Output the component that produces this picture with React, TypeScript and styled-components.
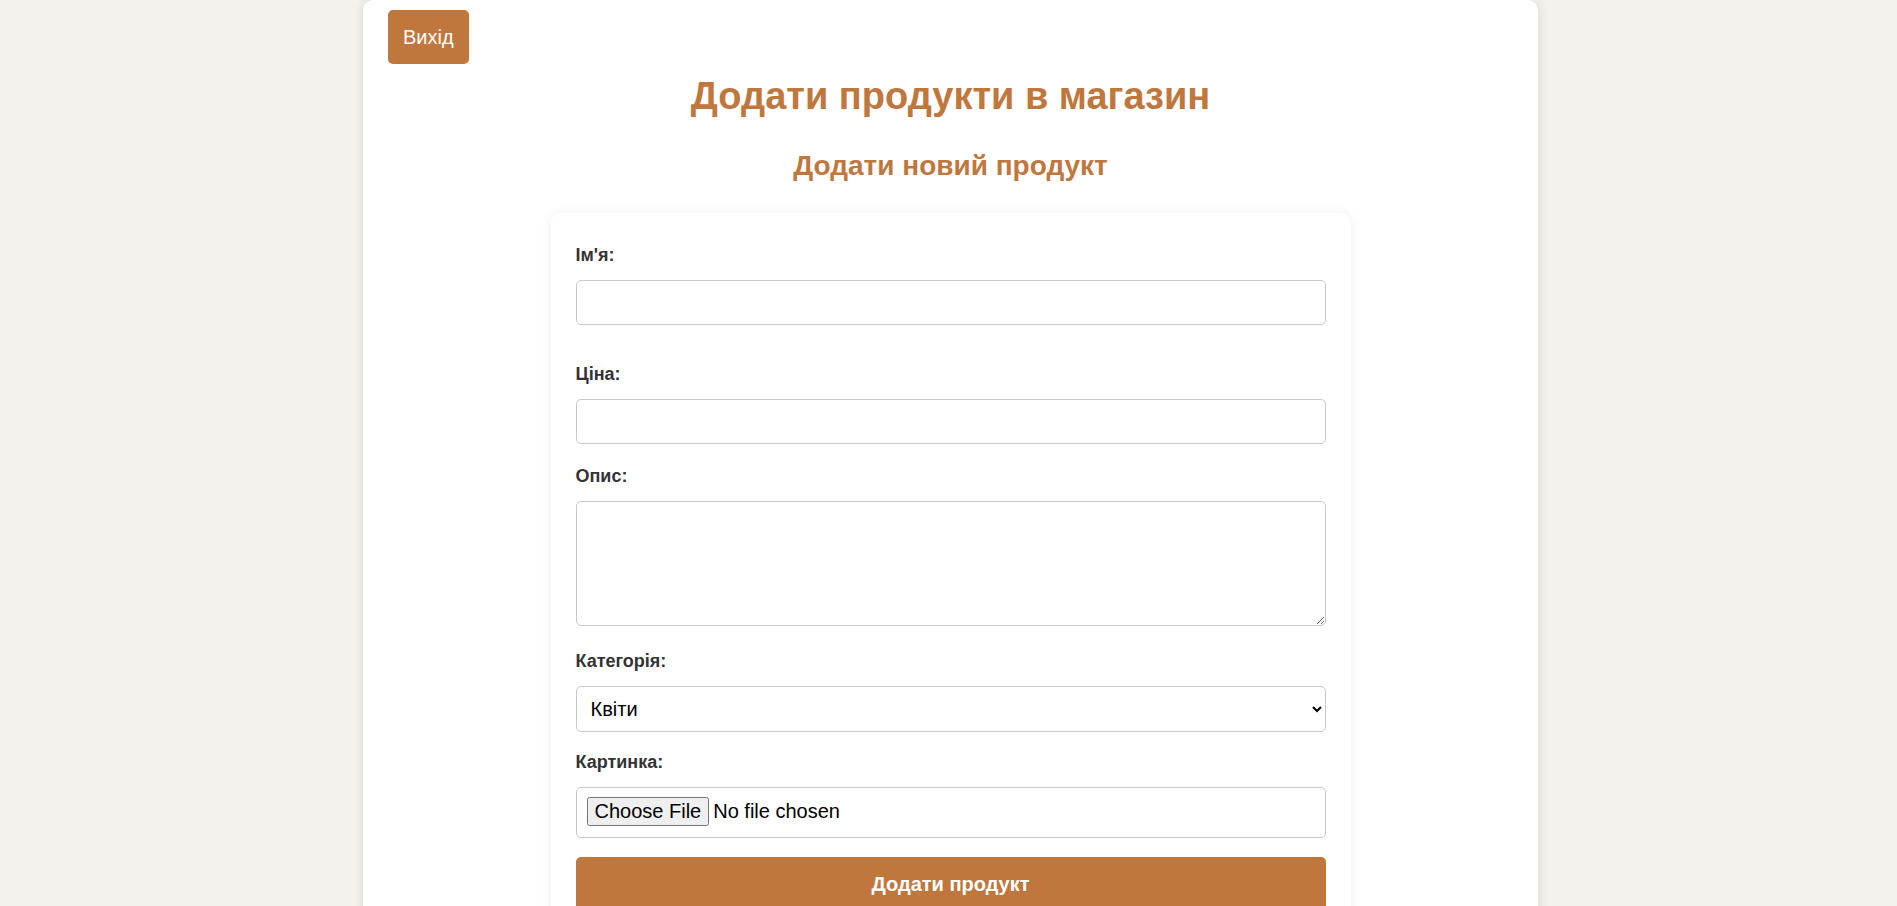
import React from "react";
import styled, { createGlobalStyle } from "styled-components";

const brown = "#bf773d";

const GlobalStyle = createGlobalStyle`
  html, body {
    margin: 0;
    padding: 0;
    background: #f5f2ed;
    font-family: "Liberation Sans", Arial, sans-serif;
  }
  * { box-sizing: border-box; }
`;

const Shell = styled.div`
  padding-left: 4px;
`;

const Page = styled.div`
  width: 1175px;
  margin: 0 auto;
  padding: 10px 25px 40px;
  background: #ffffff;
  border-radius: 10px;
  box-shadow: 0 0 12px rgba(0, 0, 0, 0.12);
  min-height: 1000px;
`;

const TopBar = styled.div`
  display: flex;
  justify-content: flex-start;
`;

const LogoutButton = styled.button`
  background: ${brown};
  color: #ffffff;
  border: none;
  border-radius: 5px;
  padding: 15px 15px;
  font-family: "Liberation Sans", Arial, sans-serif;
  font-size: 20px;
  line-height: 24px;
  cursor: pointer;
`;

const Title = styled.h1`
  margin: 8px 0 0;
  text-align: center;
  color: ${brown};
  font-family: "Liberation Sans", Arial, sans-serif;
  font-weight: 700;
  font-size: 38px;
  line-height: 48px;
`;

const Subtitle = styled.h2`
  margin: 29px 0 0;
  text-align: center;
  color: ${brown};
  font-family: "Liberation Sans", Arial, sans-serif;
  font-weight: 700;
  font-size: 28px;
  line-height: 34px;
`;

const Card = styled.form`
  width: 800px;
  margin: 30px auto 0;
  padding: 31px 25px 30px;
  background: #ffffff;
  border-radius: 10px;
  box-shadow: 0 0 12px rgba(0, 0, 0, 0.07);
`;

const Group = styled.div<{ $gap: number }>`
  display: flex;
  flex-direction: column;
  margin-bottom: ${(p) => p.$gap}px;
`;

const Label = styled.label`
  display: block;
  font-family: "Liberation Sans", Arial, sans-serif;
  font-weight: 700;
  font-size: 18px;
  line-height: 22px;
  color: #333333;
  margin-bottom: 14px;
`;

const fieldBase = `
  width: 100%;
  border: 1px solid #c8c8c8;
  border-radius: 5px;
  font-family: "Liberation Sans", Arial, sans-serif;
  font-size: 20px;
  color: #000;
  background: #fff;
`;

const TextInput = styled.input`
  ${fieldBase}
  height: 45px;
  padding: 0 15px;
`;

const TextArea = styled.textarea`
  ${fieldBase}
  height: 125px;
  padding: 10px 15px;
  display: block;
`;

const Select = styled.select`
  ${fieldBase}
  height: 46px;
  padding: 0 10px;
`;

const FileInput = styled.input`
  ${fieldBase}
  height: 51px;
  padding: 9px 10px;
`;

const SubmitButton = styled.button`
  width: 100%;
  background: ${brown};
  color: #ffffff;
  border: none;
  border-radius: 5px;
  padding: 15px;
  font-family: "Liberation Sans", Arial, sans-serif;
  font-weight: 700;
  font-size: 20px;
  line-height: 24px;
  cursor: pointer;
`;

export default function App() {
  return (
    <>
      <GlobalStyle />
      <Shell>
        <Page>
          <TopBar>
            <LogoutButton type="button">Вихід</LogoutButton>
          </TopBar>
          <Title>Додати продукти в магазин</Title>
          <Subtitle>Додати новий продукт</Subtitle>
          <Card onSubmit={(e) => e.preventDefault()}>
            <Group $gap={38}>
              <Label htmlFor="name">Ім'я:</Label>
              <TextInput id="name" type="text" />
            </Group>
            <Group $gap={21}>
              <Label htmlFor="price">Ціна:</Label>
              <TextInput id="price" type="text" />
            </Group>
            <Group $gap={24}>
              <Label htmlFor="desc">Опис:</Label>
              <TextArea id="desc" />
            </Group>
            <Group $gap={19}>
              <Label htmlFor="cat">Категорія:</Label>
              <Select id="cat" defaultValue="flowers">
                <option value="flowers">Квіти</option>
                <option value="gifts">Подарунки</option>
              </Select>
            </Group>
            <Group $gap={19}>
              <Label htmlFor="img">Картинка:</Label>
              <FileInput id="img" type="file" />
            </Group>
            <SubmitButton type="submit">Додати продукт</SubmitButton>
          </Card>
        </Page>
      </Shell>
    </>
  );
}
